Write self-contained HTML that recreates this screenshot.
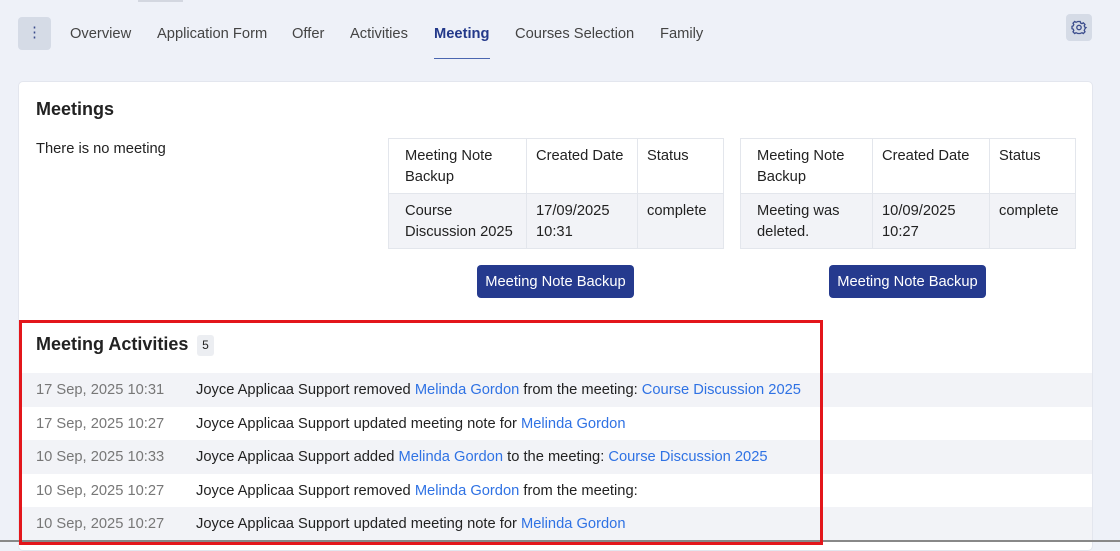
<!DOCTYPE html>
<html><head><style>
*{margin:0;padding:0;box-sizing:border-box}
body{width:1120px;height:545px;overflow:hidden;background:#eef1f8;font-family:"Liberation Sans",sans-serif;font-size:14.7px;color:#222;position:relative}
.a{position:absolute}
.nav{top:26px;font-size:14.7px;color:#444;white-space:nowrap}
table{position:absolute;border-collapse:collapse;font-size:14.7px;color:#222;table-layout:fixed}
td{border:1px solid #e3e6ec;vertical-align:top;padding:7px 2px 5px 9px;line-height:21px;height:55px;white-space:nowrap;overflow:hidden}
td.f{padding-left:16px}
tr.b td{background:#f2f3f7}
.btn{position:absolute;top:265px;height:33px;width:157px;background:#253a8e;color:#fff;border-radius:4px;text-align:center;line-height:34px;font-size:14.7px}
.row{position:absolute;left:19px;width:1073px;height:34px;line-height:35px;font-size:14.7px}
.row .d{position:absolute;left:17px;color:#777}
.row .t{position:absolute;left:177px;color:#222;white-space:nowrap}
.l{color:#2f72e4}
</style></head><body>
<div class="a" style="left:138px;top:0;width:45px;height:2px;background:#d3d7e0"></div>
<div class="a" style="left:18px;top:17px;width:33px;height:33px;background:#d5dbe6;border-radius:4px;color:#3b4c8c;text-align:center;line-height:31px;font-size:15px">⋮</div>
<div class="a nav" style="left:70px">Overview</div>
<div class="a nav" style="left:157px">Application Form</div>
<div class="a nav" style="left:292px">Offer</div>
<div class="a nav" style="left:350px">Activities</div>
<div class="a nav" style="left:434px;color:#23398a;font-weight:bold">Meeting</div>
<div class="a" style="left:434px;top:58px;width:56px;height:1px;background:#4a66b0"></div>
<div class="a nav" style="left:515px">Courses Selection</div>
<div class="a nav" style="left:660px">Family</div>
<div class="a" style="left:1066px;top:14px;width:26px;height:27px;background:#d5dbe6;border-radius:4px">
<svg width="26" height="27" viewBox="0 0 26 27"><g transform="translate(13,13.5)" fill="none" stroke="#3b4c8c" stroke-width="1.3"><circle r="2.2"/><path d="M-1.2,-6 L1.2,-6 L1.6,-4.5 L3,-3.9 L4.3,-4.7 L6,-3 L5.2,-1.7 L5.8,-0.3 L7,0 L6,1.2 L5.8,1.6 L5.2,3 L6,4.3 L4.3,6 L3,5.2 L1.6,5.8 L1.2,6 L-1.2,6 L-1.6,5.8 L-3,5.2 L-4.3,6 L-6,4.3 L-5.2,3 L-5.8,1.6 L-7,1.2 L-7,-1.2 L-5.8,-1.6 L-5.2,-3 L-6,-4.3 L-4.3,-6 L-3,-5.2 L-1.6,-5.8 Z"/></g></svg></div>
<div class="a" style="left:18px;top:81px;width:1075px;height:470px;background:#fff;border:1px solid #e3e6ee;border-radius:5px"></div>
<div class="a" style="left:36px;top:99px;font-size:18px;font-weight:bold;color:#222">Meetings</div>
<div class="a" style="left:36px;top:141px">There is no meeting</div>
<table style="left:388px;top:138px;width:335px"><colgroup><col style="width:138px"><col style="width:111px"><col style="width:86px"></colgroup><tr><td class="f">Meeting Note<br>Backup</td><td>Created Date</td><td>Status</td></tr>
<tr class="b"><td class="f">Course<br>Discussion 2025</td><td>17/09/2025<br>10:31</td><td>complete</td></tr></table>
<table style="left:740px;top:138px;width:335px"><colgroup><col style="width:132px"><col style="width:117px"><col style="width:86px"></colgroup><tr><td class="f">Meeting Note<br>Backup</td><td>Created Date</td><td>Status</td></tr>
<tr class="b"><td class="f">Meeting was<br>deleted.</td><td>10/09/2025<br>10:27</td><td>complete</td></tr></table>
<div class="btn" style="left:477px">Meeting Note Backup</div>
<div class="btn" style="left:829px">Meeting Note Backup</div>
<div class="a" style="left:36px;top:334px;font-size:18px;font-weight:bold">Meeting Activities</div>
<div class="a" style="left:197px;top:335px;width:17px;height:21px;background:#eceef2;border-radius:3px;font-size:12px;text-align:center;line-height:21px">5</div>
<div class="row" style="top:373px;background:#f2f3f7"><span class="d">17 Sep, 2025 10:31</span><span class="t">Joyce Applicaa Support removed <span class="l">Melinda Gordon</span> from the meeting: <span class="l">Course Discussion 2025</span></span></div>
<div class="row" style="top:407px"><span class="d">17 Sep, 2025 10:27</span><span class="t">Joyce Applicaa Support updated meeting note for <span class="l">Melinda Gordon</span></span></div>
<div class="row" style="top:440px;background:#f2f3f7"><span class="d">10 Sep, 2025 10:33</span><span class="t">Joyce Applicaa Support added <span class="l">Melinda Gordon</span> to the meeting: <span class="l">Course Discussion 2025</span></span></div>
<div class="row" style="top:474px"><span class="d">10 Sep, 2025 10:27</span><span class="t">Joyce Applicaa Support removed <span class="l">Melinda Gordon</span> from the meeting:</span></div>
<div class="row" style="top:507px;background:#f2f3f7"><span class="d">10 Sep, 2025 10:27</span><span class="t">Joyce Applicaa Support updated meeting note for <span class="l">Melinda Gordon</span></span></div>
<div class="a" style="left:0;top:540px;width:1120px;height:2px;background:#888"></div>
<div class="a" style="left:19px;top:320px;width:804px;height:225px;border:3px solid #e3161b"></div>
</body></html>
